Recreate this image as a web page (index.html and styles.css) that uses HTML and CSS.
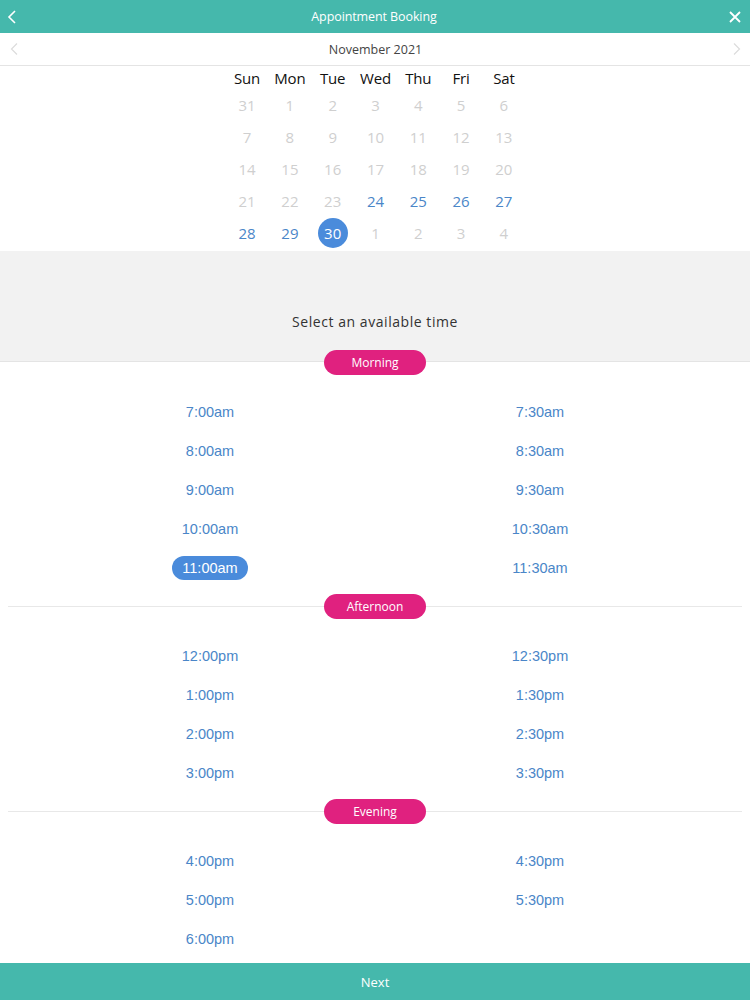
FILE: index.html
```html
<!DOCTYPE html>
<html lang="en">
<head>
<meta charset="utf-8">
<title>Appointment Booking</title>
<link rel="stylesheet" href="styles.css">
</head>
<body>
<div class="page">
  <header class="topbar">
    <span class="icon-btn back">
      <svg width="10" height="14" viewBox="0 0 10 14"><path d="M8 1 L2 7 L8 13" fill="none" stroke="#fff" stroke-width="1.6"/></svg>
    </span>
    <span class="title">Appointment Booking</span>
    <span class="icon-btn close">
      <svg width="12" height="12" viewBox="0 0 12 12"><path d="M1 1 L11 11 M11 1 L1 11" fill="none" stroke="#fff" stroke-width="1.8"/></svg>
    </span>
  </header>

  <div class="month-bar">
    <span class="month-nav">
      <svg width="8" height="12" viewBox="0 0 8 12"><path d="M7 0.5 L1.5 6 L7 11.5" fill="none" stroke="#dcdcdc" stroke-width="1.2"/></svg>
    </span>
    <span class="month-title">November 2021</span>
    <span class="month-nav">
      <svg width="8" height="12" viewBox="0 0 8 12"><path d="M1 0.5 L6.5 6 L1 11.5" fill="none" stroke="#dcdcdc" stroke-width="1.2"/></svg>
    </span>
  </div>

  <div class="calendar">
    <div class="cal-grid">
      <span class="dow">Sun</span><span class="dow">Mon</span><span class="dow">Tue</span><span class="dow">Wed</span><span class="dow">Thu</span><span class="dow">Fri</span><span class="dow">Sat</span>
      <span class="day off">31</span><span class="day off">1</span><span class="day off">2</span><span class="day off">3</span><span class="day off">4</span><span class="day off">5</span><span class="day off">6</span>
      <span class="day off">7</span><span class="day off">8</span><span class="day off">9</span><span class="day off">10</span><span class="day off">11</span><span class="day off">12</span><span class="day off">13</span>
      <span class="day off">14</span><span class="day off">15</span><span class="day off">16</span><span class="day off">17</span><span class="day off">18</span><span class="day off">19</span><span class="day off">20</span>
      <span class="day off">21</span><span class="day off">22</span><span class="day off">23</span><span class="day on">24</span><span class="day on">25</span><span class="day on">26</span><span class="day on">27</span>
      <span class="day on">28</span><span class="day on">29</span><span class="day sel"><span class="sel-dot">30</span></span><span class="day off">1</span><span class="day off">2</span><span class="day off">3</span><span class="day off">4</span>
    </div>
  </div>

  <div class="prompt">Select an available time</div>

  <main class="slots">
    <div class="section-head first"><span class="pill">Morning</span></div>
    <div class="times">
      <span class="time">7:00am</span><span class="time">7:30am</span>
      <span class="time">8:00am</span><span class="time">8:30am</span>
      <span class="time">9:00am</span><span class="time">9:30am</span>
      <span class="time">10:00am</span><span class="time">10:30am</span>
      <span class="time"><span class="time-sel">11:00am</span></span><span class="time">11:30am</span>
    </div>

    <div class="section-head"><span class="pill">Afternoon</span></div>
    <div class="times">
      <span class="time">12:00pm</span><span class="time">12:30pm</span>
      <span class="time">1:00pm</span><span class="time">1:30pm</span>
      <span class="time">2:00pm</span><span class="time">2:30pm</span>
      <span class="time">3:00pm</span><span class="time">3:30pm</span>
    </div>

    <div class="section-head"><span class="pill">Evening</span></div>
    <div class="times">
      <span class="time">4:00pm</span><span class="time">4:30pm</span>
      <span class="time">5:00pm</span><span class="time">5:30pm</span>
      <span class="time">6:00pm</span>
    </div>
  </main>

  <footer class="next-bar">Next</footer>
</div>
</body>
</html>
```

FILE: styles.css
```css
* { box-sizing: border-box; }
html, body { margin: 0; padding: 0; }
body {
  font-family: "Open Sans", "Liberation Sans", sans-serif;
  background: #fff;
  color: #333;
}
.page {
  height: 1000px;
  display: flex;
  flex-direction: column;
}
.topbar {
  height: 33px;
  background: #45b8ac;
  display: flex;
  align-items: center;
  justify-content: space-between;
  padding: 0 9px 0 7px;
  color: #fff;
}
.icon-btn { display: flex; align-items: center; width: 14px; }
.close { justify-content: flex-end; }
.title {
  font-size: 12.5px;
  letter-spacing: -0.1px;
}
.month-bar {
  height: 33px;
  display: flex;
  align-items: center;
  justify-content: space-between;
  padding: 0 9px 0 10px;
  border-bottom: 1px solid #e4e4e4;
}
.month-nav { display: flex; align-items: center; }
.month-title {
  font-size: 12.5px;
  color: #444;
}
.calendar {
  padding-bottom: 2px;
  display: flex;
  justify-content: center;
}
.cal-grid {
  display: grid;
  grid-template-columns: repeat(7, 42.8px);
  grid-auto-rows: 32px;
  grid-template-rows: 23px;
  margin-left: 1px;
}
.dow, .day {
  display: flex;
  align-items: center;
  justify-content: center;
  font-size: 15px;
}
.dow { color: #111; letter-spacing: -0.2px; }
.day.off { color: #cfcfcf; }
.day.on { color: #4a86c8; }
.sel-dot {
  width: 30px;
  height: 30px;
  border-radius: 50%;
  background: #4a8bdb;
  color: #fff;
  display: flex;
  align-items: center;
  justify-content: center;
}
.prompt {
  background: #f2f2f2;
  border-bottom: 1px solid #e4e4e4;
  padding: 61px 0 29px;
  line-height: 20px;
  text-align: center;
  font-size: 14px;
  letter-spacing: 0.55px;
  color: #333;
}
.slots { flex: 1; }
.section-head {
  height: 25px;
  display: flex;
  align-items: center;
  padding: 0 8px;
  margin-top: 7px;
}
.section-head::before, .section-head::after {
  content: "";
  flex: 1;
  height: 1px;
  background: #e8e8e8;
}
.section-head.first { margin-top: -12px; }
.section-head.first::before, .section-head.first::after { background: transparent; }
.pill {
  width: 102px;
  height: 25px;
  border-radius: 13px;
  background: #e0217f;
  color: #fff;
  font-size: 12px;
  display: flex;
  align-items: center;
  justify-content: center;
}
.times {
  padding-top: 17px;
  display: grid;
  grid-template-columns: 1fr 1fr;
  grid-auto-rows: 39px;
  padding-left: 45px;
  padding-right: 45px;
}
.time {
  display: flex;
  align-items: center;
  justify-content: center;
  font-family: "Liberation Sans", Arial, sans-serif;
  font-size: 14.5px;
  color: #4a86c8;
}
.time-sel {
  background: #4a8bdb;
  color: #fff;
  border-radius: 12px;
  height: 24px;
  padding: 0 10px;
  display: flex;
  align-items: center;
}
.next-bar {
  height: 37px;
  background: #45b8ac;
  color: #fff;
  font-size: 13px;
  display: flex;
  align-items: center;
  justify-content: center;
}
```
